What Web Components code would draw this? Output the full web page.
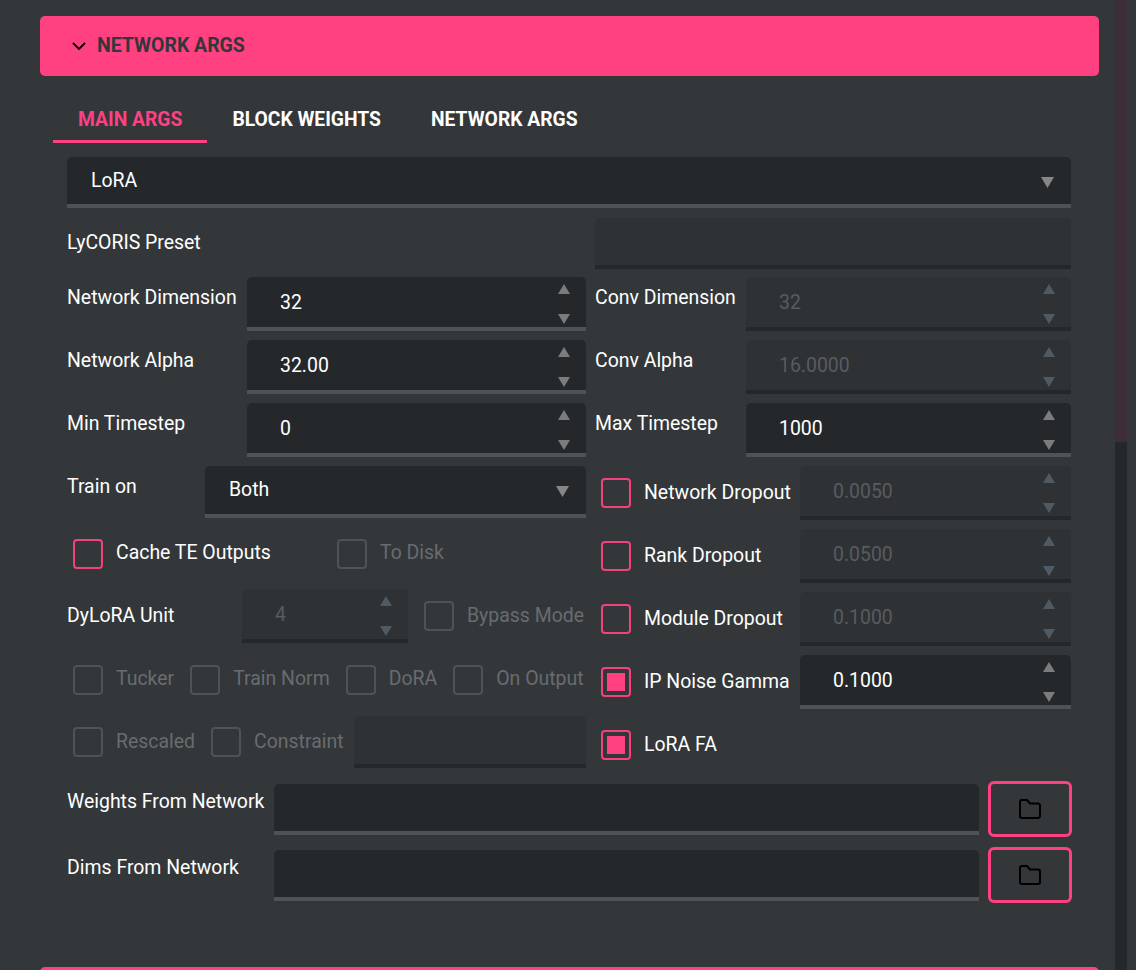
<!DOCTYPE html>
<html>
<head>
<meta charset="utf-8">
<title>Network Args</title>
<style>
    html, body{ margin: 0; padding: 0; background: #33373a; }
</style>
</head>
<body>
<net-page>
    <sect-banner>NETWORK ARGS</sect-banner>
    <tab-strip>
        <tab-item active>MAIN ARGS</tab-item>
        <tab-item>BLOCK WEIGHTS</tab-item>
        <tab-item>NETWORK ARGS</tab-item>
    </tab-strip>
    <args-form>
        <drop-select value="LoRA" style="height:51px"></drop-select>

        <arg-row center style="height:51px;margin:10px 0 8px;gap:9px">
            <arg-label style="width:519px">LyCORIS Preset</arg-label>
            <text-box disabled style="flex:1"></text-box>
        </arg-row>

        <arg-row style="gap:9px">
            <arg-column style="width:519px">
                <arg-row>
                    <arg-label style="width:180px">Network Dimension</arg-label>
                    <num-box value="32" style="flex:1"></num-box>
                </arg-row>
                <arg-row>
                    <arg-label style="width:180px">Network Alpha</arg-label>
                    <num-box value="32.00" style="flex:1"></num-box>
                </arg-row>
                <arg-row>
                    <arg-label style="width:180px">Min Timestep</arg-label>
                    <num-box value="0" style="flex:1"></num-box>
                </arg-row>
                <arg-row>
                    <arg-label style="width:138px">Train on</arg-label>
                    <drop-select value="Both" style="flex:1;height:52px;padding-bottom:1px"></drop-select>
                </arg-row>
                <arg-row center style="height:53px;padding-left:6px">
                    <arg-check style="width:264px">Cache TE Outputs</arg-check>
                    <arg-check disabled>To Disk</arg-check>
                </arg-row>
                <arg-row center>
                    <arg-label style="width:175px">DyLoRA Unit</arg-label>
                    <num-box disabled value="4" style="width:166px"></num-box>
                    <arg-check disabled style="margin-left:16px">Bypass Mode</arg-check>
                </arg-row>
                <arg-row center style="height:55px;padding-left:6px;gap:16px">
                    <arg-check disabled>Tucker</arg-check>
                    <arg-check disabled>Train Norm</arg-check>
                    <arg-check disabled>DoRA</arg-check>
                    <arg-check disabled>On Output</arg-check>
                </arg-row>
                <arg-row center style="height:52px;padding-left:6px;gap:16px">
                    <arg-check disabled>Rescaled</arg-check>
                    <arg-check disabled>Constraint</arg-check>
                    <text-box disabled style="flex:1;height:52px;margin-left:-6px"></text-box>
                </arg-row>
            </arg-column>

            <arg-column style="flex:1">
                <arg-row>
                    <arg-label style="width:151px">Conv Dimension</arg-label>
                    <num-box disabled value="32" style="flex:1"></num-box>
                </arg-row>
                <arg-row>
                    <arg-label style="width:151px">Conv Alpha</arg-label>
                    <num-box disabled value="16.0000" style="flex:1"></num-box>
                </arg-row>
                <arg-row>
                    <arg-label style="width:151px">Max Timestep</arg-label>
                    <num-box value="1000" style="flex:1"></num-box>
                </arg-row>
                <arg-row center style="padding-left:6px">
                    <arg-check style="width:199px">Network Dropout</arg-check>
                    <num-box disabled value="0.0050" style="flex:1"></num-box>
                </arg-row>
                <arg-row center style="padding-left:6px">
                    <arg-check style="width:199px">Rank Dropout</arg-check>
                    <num-box disabled value="0.0500" style="flex:1"></num-box>
                </arg-row>
                <arg-row center style="padding-left:6px">
                    <arg-check style="width:199px">Module Dropout</arg-check>
                    <num-box disabled value="0.1000" style="flex:1"></num-box>
                </arg-row>
                <arg-row center style="padding-left:6px">
                    <arg-check checked style="width:199px">IP Noise Gamma</arg-check>
                    <num-box value="0.1000" style="flex:1"></num-box>
                </arg-row>
                <arg-row center style="height:54px;padding-left:6px">
                    <arg-check checked>LoRA FA</arg-check>
                </arg-row>
            </arg-column>
        </arg-row>

        <path-row style="margin-top:9px">Weights From Network</path-row>
        <path-row style="margin-top:10px">Dims From Network</path-row>
    </args-form>
    <sect-banner style="margin-top:64px"></sect-banner>
</net-page>

<script>
// page frame: column of sections + the scrollbar on the right
class NetPage extends HTMLElement{
    constructor(){
        super()
        this.attachShadow({mode: 'open'}).innerHTML = `
        <style>
            :host{
                display: flex;
                height: 970px;
                overflow: hidden;
                background: #33373a;
                color: #fff;
                font: 19.45px/21px Roboto, "Liberation Sans", sans-serif;
            }
            #main{ width: 1059px; padding: 16px 16px 0 40px; flex: none; }
            #bar{ width: 12px; flex: none; display: flex; flex-direction: column; background: #25282a; }
            #thumb{ height: 442px; background: #3e2c36; }
        </style>
        <div id="main"><slot></slot></div>
        <div id="bar"><div id="thumb"></div></div>`
    }
}

class SectBanner extends HTMLElement{
    constructor(){
        super()
        this.attachShadow({mode: 'open'}).innerHTML = `
        <style>
            :host{
                display: flex;
                align-items: center;
                gap: 11px;
                height: 60px;
                padding-left: 32px;
                box-sizing: border-box;
                background: #ff4081;
                border-radius: 5px;
                color: #33373a;
                font-weight: 700;
            }
            svg{ display: block; flex: none; }
            #title{ position: relative; top: -1px; }
        </style>
        <svg width="14" height="9" viewBox="0 0 14 9" fill="none" stroke="#000" stroke-width="1.8"><path d="M1 1l6 6 6-6"/></svg>
        <span id="title"><slot></slot></span>`
    }
}

class TabStrip extends HTMLElement{
    constructor(){
        super()
        this.attachShadow({mode: 'open'}).innerHTML = `
        <style>
            :host{ display: flex; margin: 20px 0 14px 13px; }
        </style>
        <slot></slot>`
    }
}

class TabItem extends HTMLElement{
    constructor(){
        super()
        this.attachShadow({mode: 'open'}).innerHTML = `
        <style>
            :host{
                display: block;
                height: 47px;
                padding: 13px 25px 0;
                box-sizing: border-box;
                color: #fff;
                font-size: 19.3px;
                font-weight: 700;
            }
            :host([active]){
                color: #ff4081;
                border-bottom: 3px solid #ff4081;
            }
        </style>
        <slot></slot>`
    }
}

class ArgsForm extends HTMLElement{
    constructor(){
        super()
        this.attachShadow({mode: 'open'}).innerHTML = `
        <style>
            :host{ display: flex; flex-direction: column; margin: 0 28px 0 27px; }
        </style>
        <slot></slot>`
    }
}

class ArgRow extends HTMLElement{
    constructor(){
        super()
        this.attachShadow({mode: 'open'}).innerHTML = `
        <style>
            :host{ display: flex; align-items: flex-start; }
            :host([center]){ align-items: center; }
        </style>
        <slot></slot>`
    }
}

class ArgColumn extends HTMLElement{
    constructor(){
        super()
        this.attachShadow({mode: 'open'}).innerHTML = `
        <style>
            :host{ display: flex; flex-direction: column; gap: 9px; flex: none; }
        </style>
        <slot></slot>`
    }
}

class ArgLabel extends HTMLElement{
    constructor(){
        super()
        this.attachShadow({mode: 'open'}).innerHTML = `
        <style>
            :host{ display: block; flex: none; box-sizing: border-box; padding-top: 10px; white-space: nowrap; }
            :host-context(arg-row[center]){ padding-top: 0; position: relative; top: -1px; }
        </style>
        <slot></slot>`
    }
}

class ArgCheck extends HTMLElement{
    constructor(){
        super()
        this.attachShadow({mode: 'open'}).innerHTML = `
        <style>
            :host{ display: inline-flex; align-items: center; gap: 13px; flex: none; white-space: nowrap; box-sizing: border-box; }
            :host([disabled]){ color: #686c70; }
            #box{
                width: 30px;
                height: 30px;
                box-sizing: border-box;
                flex: none;
                display: flex;
                align-items: center;
                justify-content: center;
                border: 2px solid #f5407e;
                border-radius: 4px;
            }
            :host([disabled]) #box{ border-color: #4c5359; }
            #mark{ display: none; width: 18px; height: 18px; background: #ff4081; }
            :host([checked]) #mark{ display: block; }
            #txt{ position: relative; top: -1px; }
        </style>
        <div id="box"><div id="mark"></div></div>
        <span id="txt"><slot></slot></span>`
    }
}

class TextBox extends HTMLElement{
    constructor(){
        super()
        this.attachShadow({mode: 'open'}).innerHTML = `
        <style>
            :host{
                display: block;
                height: 51px;
                box-sizing: border-box;
                background: #25282b;
                border-bottom: 4px solid #505356;
                border-radius: 5px 5px 0 0;
            }
            :host([disabled]){ background: #2e3235; border-bottom-color: #25282a; }
        </style>`
    }
}

class DropSelect extends HTMLElement{
    constructor(){
        super()
        this.attachShadow({mode: 'open'}).innerHTML = `
        <style>
            :host{
                display: flex;
                align-items: center;
                justify-content: space-between;
                box-sizing: border-box;
                padding: 0 17px 0 24px;
                background: #25282b;
                border-bottom: 4px solid #505356;
                border-radius: 5px 5px 0 0;
                color: #fff;
            }
            svg{ display: block; margin-top: 3px; }
        </style>
        <span id="val"></span>
        <svg width="13" height="11" viewBox="0 0 13 11"><path d="M0 0h13L6.5 11z" fill="#858789"/></svg>`
        this.shadowRoot.querySelector('#val').textContent = this.getAttribute('value')
    }
}

class NumBox extends HTMLElement{
    constructor(){
        super()
        this.attachShadow({mode: 'open'}).innerHTML = `
        <style>
            :host{
                display: flex;
                align-items: center;
                justify-content: space-between;
                height: 54px;
                box-sizing: border-box;
                padding: 0 16px 0 33px;
                background: #25282b;
                border-bottom: 4px solid #505356;
                border-radius: 5px 5px 0 0;
                color: #fff;
                flex: none;
            }
            :host([disabled]){
                background: #2e3235;
                border-bottom-color: #25282a;
                color: #585c60;
            }
            #spin{ display: flex; flex-direction: column; justify-content: space-between; height: 40px; margin-top: 4px; }
            svg{ display: block; fill: #7a7c7e; }
            :host([disabled]) svg{ fill: #4e5b65; }
        </style>
        <span id="val"></span>
        <div id="spin">
            <svg width="12" height="10" viewBox="0 0 12 10"><path d="M6 0l6 10H0z"/></svg>
            <svg width="12" height="10" viewBox="0 0 12 10"><path d="M0 0h12L6 10z"/></svg>
        </div>`
        this.shadowRoot.querySelector('#val').textContent = this.getAttribute('value')
    }
}

class FolderBtn extends HTMLElement{
    constructor(){
        super()
        this.attachShadow({mode: 'open'}).innerHTML = `
        <style>
            :host{
                display: flex;
                align-items: center;
                justify-content: center;
                width: 84px;
                height: 56px;
                flex: none;
                box-sizing: border-box;
                border: 3px solid #ff4081;
                border-radius: 6px;
            }
            svg{ display: block; }
        </style>
        <svg width="24" height="22" viewBox="0 0 24 22" fill="none" stroke="#000" stroke-width="2" stroke-linejoin="round"><path d="M4 2h5l3 3.5h8a2 2 0 0 1 2 2V18a2 2 0 0 1-2 2H4a2 2 0 0 1-2-2V4a2 2 0 0 1 2-2z"/></svg>`
    }
}

class PathRow extends HTMLElement{
    constructor(){
        super()
        this.attachShadow({mode: 'open'}).innerHTML = `
        <style>
            :host{ display: flex; align-items: center; height: 56px; margin-right: -1px; }
            #lab{ width: 207px; flex: none; position: relative; top: -8px; white-space: nowrap; }
            text-box{ flex: 1; margin: 1px 9px 0 0; }
        </style>
        <div id="lab"><slot></slot></div>
        <text-box></text-box>
        <folder-btn></folder-btn>`
    }
}

customElements.define('net-page', NetPage)
customElements.define('sect-banner', SectBanner)
customElements.define('tab-strip', TabStrip)
customElements.define('tab-item', TabItem)
customElements.define('args-form', ArgsForm)
customElements.define('arg-row', ArgRow)
customElements.define('arg-column', ArgColumn)
customElements.define('arg-label', ArgLabel)
customElements.define('arg-check', ArgCheck)
customElements.define('text-box', TextBox)
customElements.define('drop-select', DropSelect)
customElements.define('num-box', NumBox)
customElements.define('folder-btn', FolderBtn)
customElements.define('path-row', PathRow)
</script>
</body>
</html>
